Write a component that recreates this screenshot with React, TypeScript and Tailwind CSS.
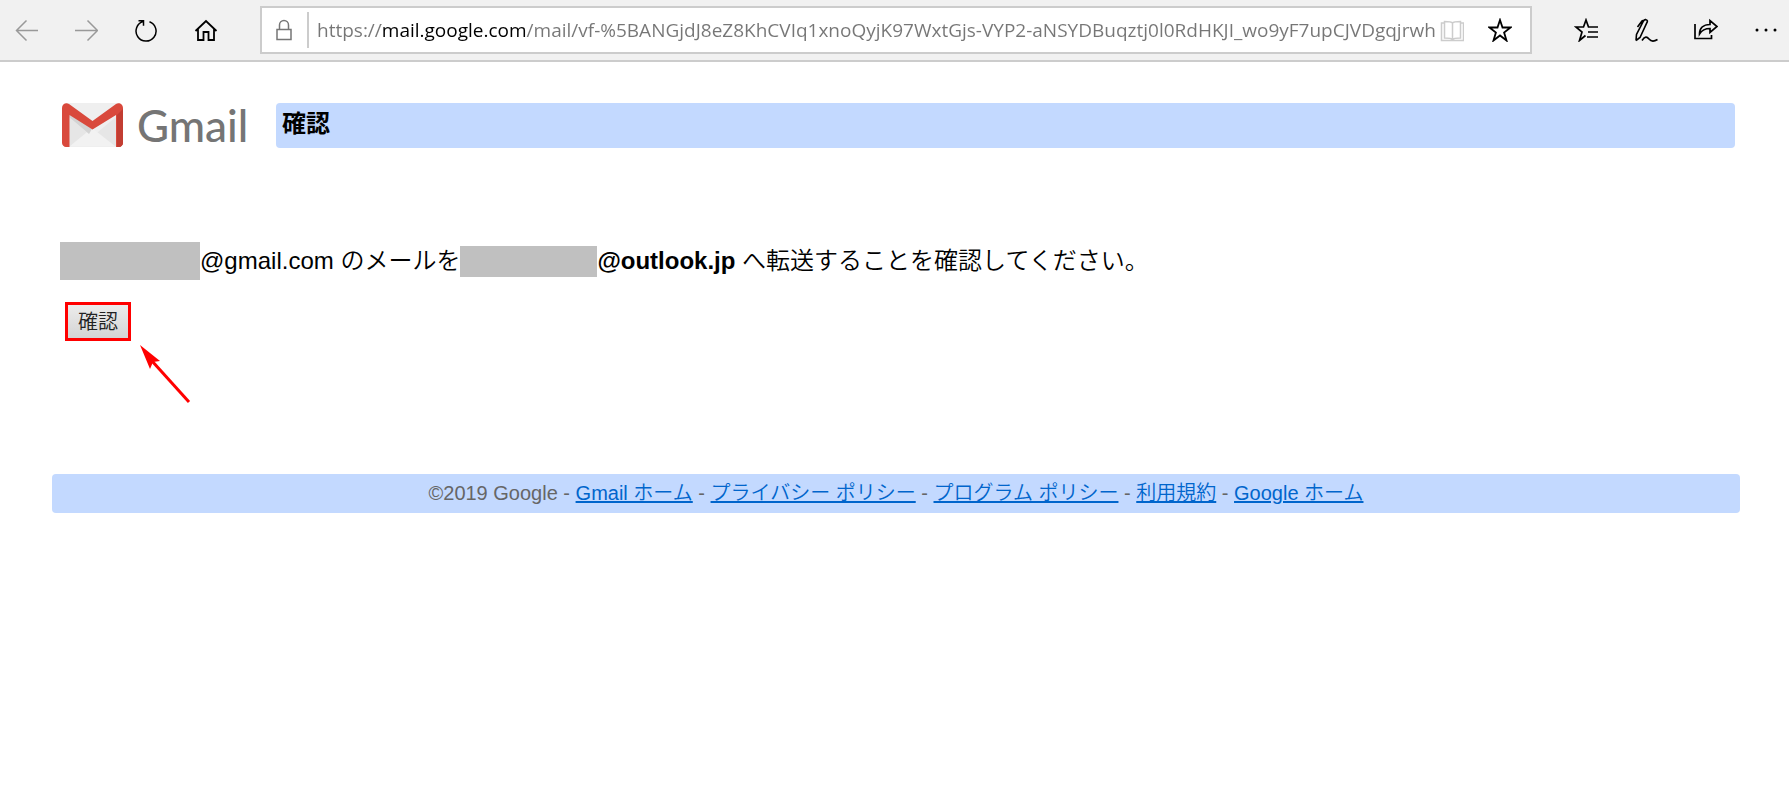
import React from 'react';

const URL_TEXT =
  'https://mail.google.com/mail/vf-%5BANGjdJ8eZ8KhCVIq1xnoQyjK97WxtGjs-VYP2-aNSYDBuqztj0l0RdHKJI_wo9yF7upCJVDgqjrwh';

const footerLinks = ['Gmail ホーム', 'プライバシー ポリシー', 'プログラム ポリシー', '利用規約', 'Google ホーム'];

type IconButtonProps = {
  label: string;
  className?: string;
  children: React.ReactNode;
};

const IconButton: React.FC<IconButtonProps> = ({ label, className = 'text-black', children }) => (
  <button type="button" aria-label={label} className={`shrink-0 ${className}`}>
    <svg viewBox="0 0 24 24" className="block size-6" fill="none" stroke="currentColor" strokeWidth="1.5">
      {children}
    </svg>
  </button>
);

const Toolbar: React.FC = () => (
  <div className="flex items-center gap-[42px] border-b-2 border-[#cccccc] bg-[#f1f1f1] py-1.5 pl-3.5 pr-[11px]">
    <nav className="flex items-center gap-9">
      <IconButton label="戻る" className="text-[#999999]">
        <path d="M24 12.5H2.5M12.5 2.5l-10 10 10 10" />
      </IconButton>
      <IconButton label="進む" className="text-[#999999]">
        <path d="M1 12.5h22.5M13.5 2.5l10 10-10 10" />
      </IconButton>
      <IconButton label="最新の情報に更新">
        <path d="M15.5 3.7A10 10 0 1 1 9.2 3.5M4.5 2.7h5v5" />
      </IconButton>
      <IconButton label="ホーム">
        <path d="M1.5 13L12 3l10.500 10M4 10.500v11.500h5.500v-8h5v8h5.500V10.500" strokeWidth="1.8" />
      </IconButton>
    </nav>

    <div className="flex h-12 min-w-0 flex-1 items-center border-2 border-[#cccccc] bg-white">
      <svg viewBox="0 0 24 24" className="ml-2.5 size-6 shrink-0" fill="none" stroke="#767676" strokeWidth="1.5">
        <path d="M5 11.500h14v10H5zM7.500 11.500V7a4.500 4.500 0 0 1 9 0v4.500" />
      </svg>
      <span className="ml-[11px] h-9 w-0.5 shrink-0 bg-[#cccccc]" />
      <input
        type="text"
        aria-label="アドレス"
        defaultValue={URL_TEXT}
        className="ml-2 h-9 min-w-0 flex-1 bg-[linear-gradient(to_right,#767676_64px,#000000_64px,#000000_209px,#767676_209px)] bg-clip-text font-['Open_Sans','Noto_Sans',sans-serif] text-[19px] text-transparent outline-none"
      />
      <div className="ml-0.5 mr-[18px] flex gap-6">
        <IconButton label="読み取りビュー" className="text-[#cccccc]">
          <path d="M12.500 5v17M12.500 5c-1-1.500-3-1.500-8-1.500V20c5 0 7 0 8 1.500 1-1.500 3-1.500 8-1.500V3.500c-5 0-7 0-8 1.500zM4 5H1.500v17.500h22V5H21" />
        </IconButton>
        <IconButton label="お気に入りに追加">
          <path
            d="M12 2l2.500 7.500h8l-6.400 5 2.400 8-6.500-5-6.500 5 2.400-8-6.400-5h8z"
            strokeWidth="1.8"
          />
        </IconButton>
      </div>
    </div>

    <div className="flex items-center gap-9">
      <IconButton label="ハブ">
        <path d="M24 9h-9.500L12 2 9.500 9H2l6 5-2.500 8.500 6-5M14 14h10M13 19h11" strokeWidth="1.7" />
      </IconButton>
      <IconButton label="ノートの追加">
        <path
          d="M2 22.500l.5-6L9.500 3c1.500-2.500 5-1 3.500 1.500L6 19.500l-4 3M3.500 9L8 3l4-1.500M8 22.500c3-4.500 5-4 7-1.500 2 2.500 4.500 3 8.500.5"
          strokeWidth="1.6"
        />
      </IconButton>
      <IconButton label="共有">
        <path
          d="M1 6v14.500h16.500V17M5.500 16c0-5.500 3.500-9.500 10.500-9.500V2.500L23 8.500l-7 6v-4C11 10.500 8 12 5.500 16z"
          strokeWidth="1.7"
        />
      </IconButton>
      <IconButton label="設定など">
        <g fill="currentColor" stroke="none">
          <circle cx="3" cy="12" r="1.5" />
          <circle cx="12" cy="12" r="1.5" />
          <circle cx="21" cy="12" r="1.5" />
        </g>
      </IconButton>
    </div>
  </div>
);

const GmailLogo: React.FC = () => (
  <div className="flex w-[214px] shrink-0 items-start gap-3.5">
    <svg viewBox="0 0 61 44" className="h-11 w-[61px] shrink-0" aria-hidden="true">
      <path d="M4 0h53v44H4z" fill="#efefef" />
      <path d="M7 14l23 20L54 14v29H7z" fill="#e6e6e6" />
      <path d="M8 43l22-18 23 18z" fill="#f2f2f2" />
      <path d="M7 14l20 17 3-5L7 8z" fill="#d3d3d3" />
      <path d="M0 5C0 1 4-1 7 1l23.500 17L54 1c3-2 7 0 7 4v35c0 2-2 4-4 4h-3V12L30.500 26.500 7.500 12v32H4c-2 0-4-2-4-4z" fill="#d9493c" />
      <path d="M55 12l6-6v34c0 2-2 4-4 4h-2z" fill="#c23d32" />
    </svg>
    <span className="font-['Lato',sans-serif] text-[44px] leading-[44px] font-medium text-[#757575]">Gmail</span>
  </div>
);

const App: React.FC = () => (
  <div className="min-h-screen bg-white font-['Liberation_Sans','Noto_Sans_CJK_JP',sans-serif] text-black">
    <Toolbar />

    <div className="pb-8 pl-[52px] pr-[49px] pt-[41px]">
      <header className="flex items-start pl-2.5 pr-[5px]">
        <GmailLogo />
        <h1 className="h-[45px] flex-1 rounded bg-[#c3d9ff] px-1.5 text-2xl leading-[42px] font-bold">確認</h1>
      </header>

      <main className="px-2 pt-[94px]">
        <p className="flex flex-wrap items-center text-2xl leading-[38px] font-[350]">
          <span className="h-[38px] w-[140px] bg-[#c0c0c0]" />
          <span>@gmail.com のメールを</span>
          <span className="h-[31px] w-[137px] bg-[#c0c0c0]" />
          <b className="font-bold">@outlook.jp</b>
          <span className="whitespace-pre"> へ転送することを確認してください。</span>
        </p>

        <div className="relative mt-[22px] ml-[5px] w-fit">
          <button
            type="button"
            className="block h-[39px] w-[66px] border-3 border-[#ff0000] bg-linear-to-b from-[#ececec] to-[#d4d4d4] text-xl leading-8 font-[350] text-[#222222]"
          >
            確認
          </button>
          <svg viewBox="0 0 52 60" className="absolute top-[42px] left-[74px] h-[60px] w-[52px]" aria-hidden="true">
            <path d="M13 17l37 41" stroke="#ff0000" strokeWidth="3" />
            <path d="M1 1l20 16-7 1-3 7z" fill="#ff0000" />
          </svg>
        </div>
      </main>

      <footer className="mt-[133px] rounded bg-[#c3d9ff] text-center text-xl leading-[39px] font-[350] text-[#666666]">
        ©2019 Google
        {footerLinks.map((link) => (
          <React.Fragment key={link}>
            {' - '}
            <a href="#" className="text-[#0065cc] underline">
              {link}
            </a>
          </React.Fragment>
        ))}
      </footer>
    </div>
  </div>
);

export default App;
